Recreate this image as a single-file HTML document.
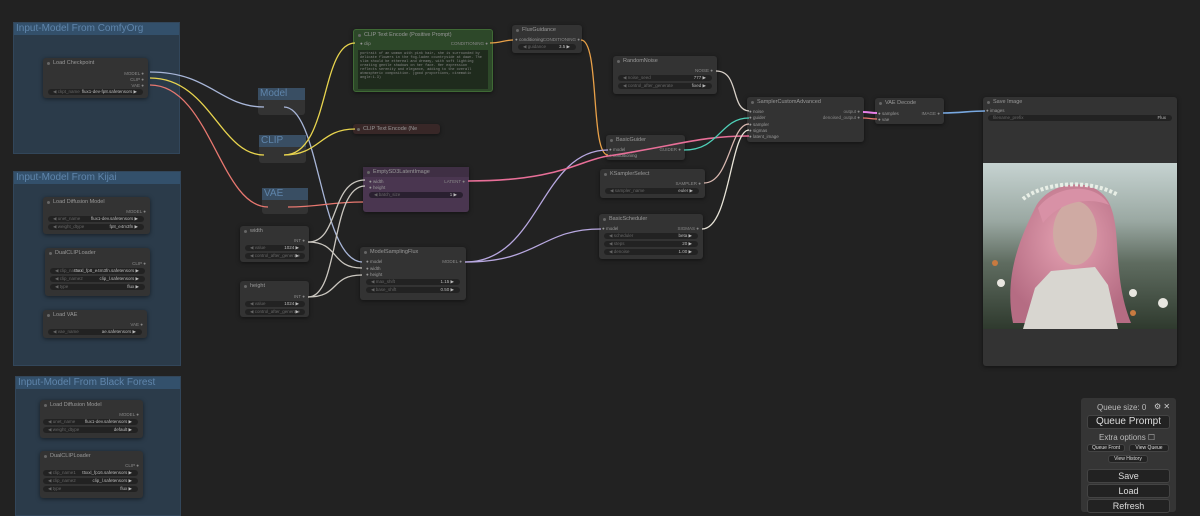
<!DOCTYPE html>
<html><head><meta charset="utf-8">
<style>
*{box-sizing:border-box;margin:0;padding:0}
body{width:1200px;height:510px;overflow:hidden;background:#222222;font-family:"Liberation Sans",sans-serif;position:relative}
.g{position:absolute;background:#2b3b4a;border:1px solid #32465a}
.g .t{height:12px;background:#33506b;color:#5f85ab;font-size:10px;line-height:12px;padding-left:2px;white-space:nowrap;overflow:hidden}
.n{position:absolute;background:#333;border-radius:3px;box-shadow:0 1px 4px rgba(0,0,0,.5);color:#888;font-size:5px}
.n .h{height:10px;line-height:10px;padding-left:10px;color:#999;font-size:5.5px;position:relative;white-space:nowrap;overflow:hidden}
.n .h:before{content:"";position:absolute;left:4px;top:4px;width:3px;height:3px;border-radius:50%;background:#666}
.w{position:absolute;height:6px;background:#222;border-radius:3px;color:#666;font-size:4.5px;line-height:6px;padding:0 5px;white-space:nowrap;overflow:hidden}
.w b{position:absolute;right:6px;color:#bbb;font-weight:normal}
.o{position:absolute;right:4px;font-size:4.5px;color:#888}
.i{position:absolute;left:6px;font-size:4.5px;color:#999}
.r{position:absolute;background:#333;border-radius:3px}
.r .h{height:12px;background:#394e63;color:#5f85ab;font-size:10px;line-height:12px;padding-left:2px}
.btn{position:absolute;left:6px;width:83px;background:#222;border:1px solid #444;border-radius:3px;color:#ddd;text-align:center}
</style></head><body>

<div class="g" style="left:13px;top:22px;width:167px;height:132px"><div class="t">Input-Model From ComfyOrg</div></div>
<div class="g" style="left:13px;top:171px;width:168px;height:195px"><div class="t">Input-Model From Kijai</div></div>
<div class="g" style="left:15px;top:376px;width:166px;height:140px"><div class="t">Input-Model From Black Forest</div></div>

<div class="n" style="left:43px;top:58px;width:105px;height:40px"><div class="h">Load Checkpoint</div>
<div class="o" style="top:13px">MODEL ●</div><div class="o" style="top:19px">CLIP ●</div><div class="o" style="top:25px">VAE ●</div>
<div class="w" style="left:5px;top:31px;width:95px">◀ ckpt_name<b>flux1-dev-fp8.safetensors ▶</b></div></div>

<div class="n" style="left:43px;top:197px;width:107px;height:37px"><div class="h">Load Diffusion Model</div>
<div class="o" style="top:12px">MODEL ●</div>
<div class="w" style="left:5px;top:19px;width:96px">◀ unet_name<b>flux1-dev.safetensors ▶</b></div>
<div class="w" style="left:5px;top:27px;width:96px">◀ weight_dtype<b>fp8_e4m3fn ▶</b></div></div>

<div class="n" style="left:45px;top:248px;width:105px;height:48px"><div class="h">DualCLIPLoader</div>
<div class="o" style="top:13px">CLIP ●</div>
<div class="w" style="left:5px;top:20px;width:95px">◀ clip_name1<b>t5xxl_fp8_e4m3fn.safetensors ▶</b></div>
<div class="w" style="left:5px;top:28px;width:95px">◀ clip_name2<b>clip_l.safetensors ▶</b></div>
<div class="w" style="left:5px;top:36px;width:95px">◀ type<b>flux ▶</b></div></div>

<div class="n" style="left:43px;top:310px;width:104px;height:28px"><div class="h">Load VAE</div>
<div class="o" style="top:12px">VAE ●</div>
<div class="w" style="left:5px;top:19px;width:94px">◀ vae_name<b>ae.safetensors ▶</b></div></div>

<div class="n" style="left:40px;top:400px;width:103px;height:38px"><div class="h">Load Diffusion Model</div>
<div class="o" style="top:12px">MODEL ●</div>
<div class="w" style="left:3px;top:19px;width:95px">◀ unet_name<b>flux1-dev.safetensors ▶</b></div>
<div class="w" style="left:3px;top:27px;width:95px">◀ weight_dtype<b>default ▶</b></div></div>

<div class="n" style="left:40px;top:451px;width:103px;height:47px"><div class="h">DualCLIPLoader</div>
<div class="o" style="top:12px">CLIP ●</div>
<div class="w" style="left:3px;top:19px;width:95px">◀ clip_name1<b>t5xxl_fp16.safetensors ▶</b></div>
<div class="w" style="left:3px;top:27px;width:95px">◀ clip_name2<b>clip_l.safetensors ▶</b></div>
<div class="w" style="left:3px;top:35px;width:95px">◀ type<b>flux ▶</b></div></div>

<div class="r" style="left:258px;top:88px;width:47px;height:27px"><div class="h">Model</div></div>
<div class="r" style="left:259px;top:135px;width:47px;height:28px"><div class="h">CLIP</div></div>
<div class="r" style="left:262px;top:188px;width:46px;height:26px"><div class="h">VAE</div></div>

<div class="n" style="left:353px;top:29px;width:140px;height:63px;background:#2d4829;border:1px solid #3f6a35"><div class="h">CLIP Text Encode (Positive Prompt)</div>
<div class="i" style="top:11px">● clip</div><div class="o" style="top:11px">CONDITIONING ●</div>
<div style="position:absolute;left:4px;top:20px;width:130px;height:39px;background:#1f2b1d;color:#888;font-size:3.5px;line-height:4px;padding:2px;font-family:'Liberation Mono',monospace;overflow:hidden">portrait of an woman with pink hair, she is surrounded by delicate flowers in the fog-laden countryside at dawn. The slim should be ethereal and dreamy, with soft lighting creating gentle shadows on her face. Her expression reflects serenity and elegance, adding to the overall atmospheric composition. (good proportions, cinematic angle:1.3)</div></div>

<div class="n" style="left:353px;top:124px;width:87px;height:10px;background:#382727"><div class="h">CLIP Text Encode (Ne</div></div>

<div class="n" style="left:363px;top:167px;width:106px;height:45px;background:#4a3650"><div class="h" style="background:#3f2f44">EmptySD3LatentImage</div>
<div class="i" style="top:12px">● width</div><div class="i" style="top:18px">● height</div><div class="o" style="top:12px">LATENT ●</div>
<div class="w" style="left:6px;top:25px;width:94px;background:#2a2030">◀ batch_size<b>1 ▶</b></div></div>

<div class="n" style="left:240px;top:226px;width:69px;height:36px"><div class="h">width</div>
<div class="o" style="top:12px">INT ●</div>
<div class="w" style="left:5px;top:19px;width:60px">◀ value<b>1024 ▶</b></div>
<div class="w" style="left:5px;top:27px;width:60px">◀ control_after_generate<b>▶</b></div></div>
<div class="n" style="left:240px;top:281px;width:69px;height:36px"><div class="h">height</div>
<div class="o" style="top:13px">INT ●</div>
<div class="w" style="left:5px;top:20px;width:60px">◀ value<b>1024 ▶</b></div>
<div class="w" style="left:5px;top:28px;width:60px">◀ control_after_generate<b>▶</b></div></div>

<div class="n" style="left:360px;top:247px;width:106px;height:53px"><div class="h">ModelSamplingFlux</div>
<div class="i" style="top:12px">● model</div><div class="i" style="top:19px">● width</div><div class="i" style="top:25px">● height</div><div class="o" style="top:12px">MODEL ●</div>
<div class="w" style="left:6px;top:32px;width:94px">◀ max_shift<b>1.15 ▶</b></div>
<div class="w" style="left:6px;top:40px;width:94px">◀ base_shift<b>0.50 ▶</b></div></div>

<div class="n" style="left:512px;top:25px;width:70px;height:28px"><div class="h">FluxGuidance</div>
<div class="i" style="top:12px;left:3px">● conditioning</div><div class="o" style="top:12px;right:2px">CONDITIONING ●</div>
<div class="w" style="left:6px;top:19px;width:58px">◀ guidance<b>3.5 ▶</b></div></div>

<div class="n" style="left:613px;top:56px;width:104px;height:38px"><div class="h">RandomNoise</div>
<div class="o" style="top:12px">NOISE ●</div>
<div class="w" style="left:5px;top:19px;width:94px">◀ noise_seed<b>777 ▶</b></div>
<div class="w" style="left:5px;top:27px;width:94px">◀ control_after_generate<b>fixed ▶</b></div></div>

<div class="n" style="left:606px;top:135px;width:79px;height:25px"><div class="h">BasicGuider</div>
<div class="i" style="top:12px;left:3px">● model</div><div class="i" style="top:18px;left:3px">● conditioning</div><div class="o" style="top:12px">GUIDER ●</div></div>

<div class="n" style="left:600px;top:169px;width:105px;height:29px"><div class="h">KSamplerSelect</div>
<div class="o" style="top:12px">SAMPLER ●</div>
<div class="w" style="left:5px;top:19px;width:94px">◀ sampler_name<b>euler ▶</b></div></div>

<div class="n" style="left:599px;top:214px;width:104px;height:45px"><div class="h">BasicScheduler</div>
<div class="i" style="top:12px;left:3px">● model</div><div class="o" style="top:12px">SIGMAS ●</div>
<div class="w" style="left:5px;top:19px;width:94px">◀ scheduler<b>beta ▶</b></div>
<div class="w" style="left:5px;top:27px;width:94px">◀ steps<b>20 ▶</b></div>
<div class="w" style="left:5px;top:35px;width:94px">◀ denoise<b>1.00 ▶</b></div></div>

<div class="n" style="left:747px;top:97px;width:117px;height:45px"><div class="h">SamplerCustomAdvanced</div>
<div class="i" style="top:12px;left:2px">● noise</div><div class="i" style="top:18px;left:2px">● guider</div><div class="i" style="top:25px;left:2px">● sampler</div><div class="i" style="top:31px;left:2px">● sigmas</div><div class="i" style="top:37px;left:2px">● latent_image</div>
<div class="o" style="top:12px">output ●</div><div class="o" style="top:18px">denoised_output ●</div></div>

<div class="n" style="left:875px;top:98px;width:69px;height:26px"><div class="h">VAE Decode</div>
<div class="i" style="top:13px;left:3px">● samples</div><div class="i" style="top:19px;left:3px">● vae</div><div class="o" style="top:13px">IMAGE ●</div></div>

<div class="n" style="left:983px;top:97px;width:194px;height:269px"><div class="h">Save Image</div>
<div class="i" style="top:11px;left:3px">● images</div>
<div class="w" style="left:5px;top:18px;width:184px">filename_prefix<b>Flux</b></div>
<svg style="position:absolute;left:0;top:66px" width="194" height="166" viewBox="0 0 194 166">
<defs><linearGradient id="bg" x1="0" y1="0" x2="0" y2="1"><stop offset="0" stop-color="#c6d3d1"/><stop offset=".35" stop-color="#9aa8a2"/><stop offset=".6" stop-color="#5f6c60"/><stop offset="1" stop-color="#2f3a2e"/></linearGradient>
<radialGradient id="hr" cx=".5" cy=".4" r=".6"><stop offset="0" stop-color="#e6a3b3"/><stop offset="1" stop-color="#b56c83"/></radialGradient></defs>
<rect width="194" height="166" fill="url(#bg)"/>
<path d="M30 160 C20 110 40 70 52 45 C65 18 110 12 125 38 C140 65 128 110 148 160 Z" fill="url(#hr)"/>
<ellipse cx="92" cy="70" rx="22" ry="32" fill="#cfaaa3"/>
<path d="M55 45 C72 22 112 18 126 42 C110 35 80 35 60 60 Z" fill="#d891a6"/>
<path d="M40 36 C60 20 105 15 135 32" stroke="#e8eee6" stroke-width="4" fill="none" stroke-dasharray="3 2"/>
<path d="M68 108 L112 104 L125 122 L135 166 L40 166 L52 125 Z" fill="#d8d6d0"/>
<circle cx="18" cy="120" r="4" fill="#e8e6e0"/><circle cx="150" cy="130" r="4" fill="#e8e6e0"/><circle cx="180" cy="140" r="5" fill="#e8e6e0"/><circle cx="12" cy="100" r="3" fill="#c77a40"/><circle cx="150" cy="150" r="3" fill="#c77a40"/>
</svg></div>

<svg style="position:absolute;left:0;top:0" width="1200" height="510" fill="none" stroke-width="1.3">
<path d="M150 72 C210 72 220 107 264 107" stroke="#a8b6d8"/>
<path d="M150 78 C210 78 220 155 264 155" stroke="#e8d44e"/>
<path d="M150 85 C210 85 220 207 268 207" stroke="#e87870"/>
<path d="M284 107 C320 107 320 260 362 262" stroke="#a8b6d8"/>
<path d="M284 155 C330 155 320 43 355 43" stroke="#e8d44e"/>
<path d="M284 155 C320 155 320 129 355 129" stroke="#e8d44e"/>
<path d="M288 207 C320 207 330 202 363 202" stroke="#e87870"/>
<path d="M308 242 C340 242 330 180 365 180" stroke="#cbc7c0"/>
<path d="M308 242 C340 242 330 268 362 268" stroke="#cbc7c0"/>
<path d="M308 297 C340 297 330 186 365 186" stroke="#cbc7c0"/>
<path d="M308 297 C340 297 330 275 362 275" stroke="#cbc7c0"/>
<path d="M490 43 C500 43 505 40 513 40" stroke="#e8a048"/>
<path d="M581 40 C600 40 590 155 608 155" stroke="#e8a048"/>
<path d="M465 262 C540 262 540 150 608 150" stroke="#b8a8e0"/>
<path d="M465 262 C540 262 540 229 601 229" stroke="#b8a8e0"/>
<path d="M468 181 C560 181 580 160 608 156 C680 145 700 136 749 136" stroke="#e86f98" stroke-width="1.6"/>
<path d="M716 71 C740 71 730 110 749 111" stroke="#d8d0c8"/>
<path d="M684 150 C720 150 720 118 749 118" stroke="#4fd0b8"/>
<path d="M704 183 C730 183 730 124 749 124" stroke="#d8b8b0"/>
<path d="M702 229 C730 229 730 130 749 130" stroke="#e8e4d8"/>
<path d="M863 112 C870 112 870 113 877 113" stroke="#e880e8" stroke-width="2"/>
<path d="M863 118 C870 118 870 119 877 119" stroke="#e87870"/>
<path d="M943 113 C960 113 970 111 985 111" stroke="#78a8e0" stroke-width="1.6"/>
</svg>

<div style="position:absolute;left:1081px;top:398px;width:95px;height:114px;background:#353535;border-radius:3px;color:#ddd">
<div style="position:absolute;left:16px;top:5px;font-size:8px;color:#bbb">Queue size: 0</div>
<div style="position:absolute;left:73px;top:4px;font-size:8px;color:#ccc">⚙ ✕</div>
<div class="btn" style="top:17px;height:14px;font-size:10px;line-height:12px">Queue Prompt</div>
<div style="position:absolute;left:18px;top:35px;font-size:8px;color:#bbb">Extra options ☐</div>
<div class="btn" style="left:6px;top:46px;width:38px;height:8px;font-size:5px;line-height:6px">Queue Front</div>
<div class="btn" style="left:48px;top:46px;width:40px;height:8px;font-size:5px;line-height:6px">View Queue</div>
<div class="btn" style="left:27px;top:57px;width:40px;height:8px;font-size:5px;line-height:6px">View History</div>
<div class="btn" style="top:71px;height:14px;font-size:9px;line-height:12px">Save</div>
<div class="btn" style="top:86px;height:14px;font-size:9px;line-height:12px">Load</div>
<div class="btn" style="top:101px;height:14px;font-size:9px;line-height:12px">Refresh</div>
</div>
</body></html>
